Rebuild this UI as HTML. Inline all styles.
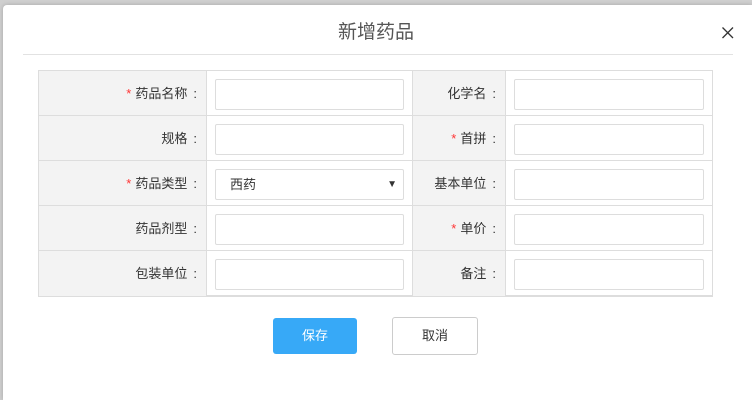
<!DOCTYPE html>
<html><head><meta charset="utf-8"><style>
*{margin:0;padding:0;box-sizing:border-box}
html{width:752px;height:400px;overflow:hidden}
body{width:752px;height:400px;overflow:hidden;background:#cfcfcf;font-family:"Liberation Sans","Noto Sans CJK SC",sans-serif;position:relative}
.dlg{position:absolute;left:3px;top:5px;width:749px;height:395px;background:#fff;border-radius:4px 0 0 0;box-shadow:0 0 4px rgba(0,0,0,.2)}
.title{position:absolute;left:0;top:33px;width:752px;text-align:center;font-size:19px;color:#555;line-height:1;transform:translateY(-10px)}
.close{position:absolute;left:718px;top:22px;width:20px;height:20px}
.hr{position:absolute;left:23px;top:54px;width:710px;height:1px;background:#e2e2e2}
.tbl{position:absolute;left:38px;top:70px;width:675px;height:227px;border:1px solid #ddd;border-bottom:2px solid #ddd;background:#fff}
.c{position:absolute;border-right:1px solid #ddd;border-bottom:1px solid #ddd}
.lab{background:#f3f3f3;text-align:right;font-size:13px;color:#333;line-height:45px;padding-right:9px}
.st{color:#f33;margin-right:4px}
.co{margin-left:6px}
.inp{position:absolute;height:31px;border:1px solid #ddd;border-radius:2px;background:#fff;font-size:13px;color:#333;line-height:29px;padding-left:14px}
.btn{position:absolute;top:318px;height:36px;font-size:13px;line-height:36px;text-align:center;border-radius:3px}
</style></head><body>
<div class="dlg"></div>
<div class="title">新增药品</div>
<svg class="close" viewBox="0 0 20 20"><path d="M4.5 5.5L15 16M15 5.5L4.5 16" stroke="#333" stroke-width="1.3"/></svg>
<div class="hr"></div>
<div class="tbl"></div>
<div id="g"></div>
<script>
var rows=[["*药品名称","化学名"],["规格","*首拼"],["*药品类型","基本单位"],["药品剂型","*单价"],["包装单位","备注"]];
var h="";
rows.forEach(function(r,i){
 var y=71+i*45;
 var l=r[0],rr=r[1];
 function lab(t){return t[0]=="*"?'<span class="st">*</span>'+t.slice(1)+'<span class="co">:</span>':t+'<span class="co">:</span>';}
 var bb=i==4?'border-bottom:none;':'';
 h+='<div class="c lab" style="left:39px;top:'+y+'px;width:168px;height:45px;'+bb+'">'+lab(l)+'</div>';
 h+='<div class="c" style="left:207px;top:'+y+'px;width:206px;height:45px;'+bb+'"></div>';
 h+='<div class="c lab" style="left:413px;top:'+y+'px;width:93px;height:45px;'+bb+'">'+lab(rr)+'</div>';
 h+='<div class="c" style="left:506px;top:'+y+'px;width:206px;height:45px;border-right:none;'+bb+'"></div>';
 h+='<div class="inp" style="left:215px;top:'+(y+8)+'px;width:189px">'+(i==2?'西药<span style="position:absolute;right:6px;font-size:10px">▼</span>':'')+'</div>';
 h+='<div class="inp" style="left:514px;top:'+(y+8)+'px;width:190px"></div>';
});
document.getElementById("g").innerHTML=h;
</script>
<div class="btn" style="left:273px;width:84px;background:#37a9f7;color:#fff">保存</div>
<div class="btn" style="left:392px;width:86px;top:317px;height:38px;line-height:36px;border:1px solid #ccc;color:#333;background:#fff">取消</div>
</body></html>
